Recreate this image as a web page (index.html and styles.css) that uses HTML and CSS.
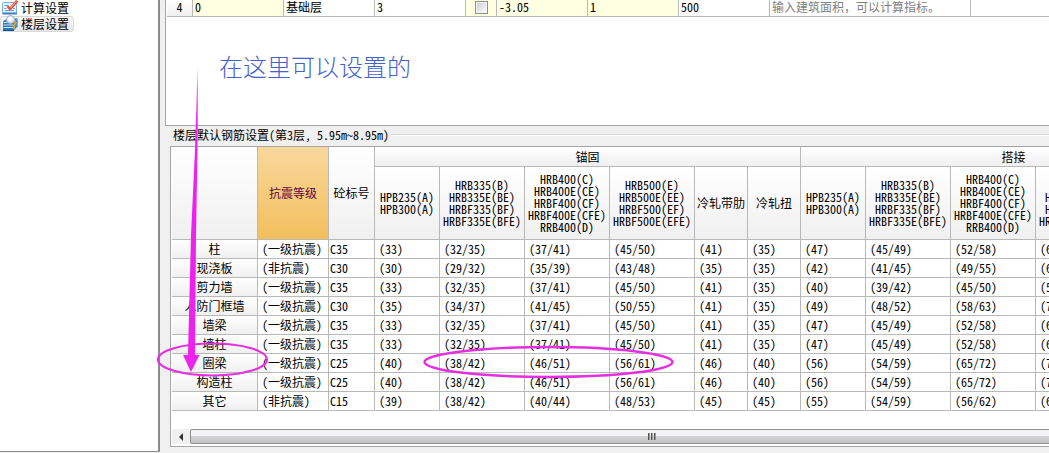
FILE: index.html
```html
<!DOCTYPE html>
<html lang="zh-CN">
<head>
<meta charset="utf-8">
<title>楼层设置</title>
<link rel="stylesheet" href="styles.css">
</head>
<body>
<div class="app">
  <nav class="sidebar">
    <button class="nav-item" type="button">
      <svg class="nav-icon" viewBox="0 0 16 16" aria-hidden="true">
        <rect x="0.5" y="2.5" width="14" height="11" rx="1" fill="#e4f1fc" stroke="#7db2e0"/>
        <path d="M0.500 12.500h14.500v2H0.500z" fill="#3f7dc0"/>
        <path d="M2.500 5.500h4M2.500 8.500h2M11 8.500h2M3 10.500h9" stroke="#6d9fd4"/>
        <path d="M5.500 6l2.500 3.500" stroke="#d9472f" stroke-width="2"/>
        <path d="M14 0l2.500 1.500-7 8-2.500 1 .5-3z" fill="#e2553b"/>
        <path d="M14 1.500l-5.500 6.500" stroke="#f6a58e"/>
      </svg>
      <span>计算设置</span>
    </button>
    <button class="nav-item selected" type="button">
      <svg class="nav-icon" viewBox="0 0 16 16" aria-hidden="true">
        <path d="M1 5.500L5 2.500h10.500v8L12 14.500H1z" fill="#2b78b4"/>
        <path d="M1.500 6.500h10M1.500 9h10M1.500 11.500h10" stroke="#c9eaff"/>
        <path d="M12 6.500L15.500 3M12 9l3.500-3M12 11.500L15.500 8M12 14l3.500-3.500" stroke="#79b6dd"/>
        <path d="M12 4l1.500 3-2 3 1 3" stroke="#d5a13c" stroke-width="2" fill="none"/>
        <circle cx="8.500" cy="3.500" r="4" fill="#dfe8f4" stroke="#a3b2cb"/>
        <circle cx="8" cy="3" r="2" fill="#fff"/>
        <path d="M1 14.500h11" stroke="#174f86"/>
      </svg>
      <span>楼层设置</span>
    </button>
  </nav>

  <main class="main">
    <section class="floors">
      <table class="floor-table">
        <colgroup><col class="w-num"><col class="w-std"><col class="w-std"><col class="w-std"><col class="w-check"><col class="w-std"><col class="w-std"><col class="w-std"><col class="w-note"><col class="w-note"></colgroup>
        <tbody>
          <tr>
            <th scope="row">4</th>
            <td class="tint">0</td>
            <td>基础层</td>
            <td>3</td>
            <td class="tint check"><input type="checkbox" aria-label="首层"></td>
            <td class="tint">-3.05</td>
            <td class="tint">1</td>
            <td>500</td>
            <td class="note">输入建筑面积，可以计算指标。</td>
            <td></td>
          </tr>
        </tbody>
      </table>
    </section>

    <section class="rebar">
      <h2 class="rebar-title">楼层默认钢筋设置(第3层, 5.95m~8.95m)</h2>
      <div class="grid-frame">
        <table class="rebar-table">
          <colgroup><col class="c-name"><col class="c-grade"><col class="c-mark"><col class="c-a"><col class="c-b"><col class="c-b"><col class="c-b"><col class="c-s"><col class="c-s"><col class="c-a"><col class="c-b"><col class="c-b"><col class="c-b"><col class="c-s"><col class="c-s"></colgroup>
          <thead>
            <tr class="groups">
              <th rowspan="2"></th>
              <th rowspan="2" class="active">抗震等级</th>
              <th rowspan="2">砼标号</th>
              <th colspan="6">锚固</th>
              <th colspan="6">搭接</th>
            </tr>
            <tr class="kinds">
              <th>HPB235(A)<br>HPB300(A)</th>
              <th>HRB335(B)<br>HRB335E(BE)<br>HRBF335(BF)<br>HRBF335E(BFE)</th>
              <th>HRB400(C)<br>HRB400E(CE)<br>HRBF400(CF)<br>HRBF400E(CFE)<br>RRB400(D)</th>
              <th>HRB500(E)<br>HRB500E(EE)<br>HRBF500(EF)<br>HRBF500E(EFE)</th>
              <th>冷轧带肋</th>
              <th>冷轧扭</th>
              <th>HPB235(A)<br>HPB300(A)</th>
              <th>HRB335(B)<br>HRB335E(BE)<br>HRBF335(BF)<br>HRBF335E(BFE)</th>
              <th>HRB400(C)<br>HRB400E(CE)<br>HRBF400(CF)<br>HRBF400E(CFE)<br>RRB400(D)</th>
              <th>HRB500(E)<br>HRB500E(EE)<br>HRBF500(EF)<br>HRBF500E(EFE)</th>
              <th>冷轧带肋</th>
              <th>冷轧扭</th>
            </tr>
          </thead>
          <tbody>
            <tr><th scope="row">柱</th><td>(一级抗震)</td><td class="mark">C35</td><td>(33)</td><td>(32/35)</td><td>(37/41)</td><td>(45/50)</td><td>(41)</td><td>(35)</td><td>(47)</td><td>(45/49)</td><td>(52/58)</td><td>(6</td><td></td><td></td></tr>
            <tr><th scope="row">现浇板</th><td>(非抗震)</td><td class="mark">C30</td><td>(30)</td><td>(29/32)</td><td>(35/39)</td><td>(43/48)</td><td>(35)</td><td>(35)</td><td>(42)</td><td>(41/45)</td><td>(49/55)</td><td>(6</td><td></td><td></td></tr>
            <tr><th scope="row">剪力墙</th><td>(一级抗震)</td><td class="mark">C35</td><td>(33)</td><td>(32/35)</td><td>(37/41)</td><td>(45/50)</td><td>(41)</td><td>(35)</td><td>(40)</td><td>(39/42)</td><td>(45/50)</td><td>(5</td><td></td><td></td></tr>
            <tr><th scope="row">人防门框墙</th><td>(一级抗震)</td><td class="mark">C30</td><td>(35)</td><td>(34/37)</td><td>(41/45)</td><td>(50/55)</td><td>(41)</td><td>(35)</td><td>(49)</td><td>(48/52)</td><td>(58/63)</td><td>(7</td><td></td><td></td></tr>
            <tr><th scope="row">墙梁</th><td>(一级抗震)</td><td class="mark">C35</td><td>(33)</td><td>(32/35)</td><td>(37/41)</td><td>(45/50)</td><td>(41)</td><td>(35)</td><td>(47)</td><td>(45/49)</td><td>(52/58)</td><td>(6</td><td></td><td></td></tr>
            <tr><th scope="row">墙柱</th><td>(一级抗震)</td><td class="mark">C35</td><td>(33)</td><td>(32/35)</td><td>(37/41)</td><td>(45/50)</td><td>(41)</td><td>(35)</td><td>(47)</td><td>(45/49)</td><td>(52/58)</td><td>(6</td><td></td><td></td></tr>
            <tr><th scope="row">圈梁</th><td>(一级抗震)</td><td class="mark">C25</td><td>(40)</td><td>(38/42)</td><td>(46/51)</td><td>(56/61)</td><td>(46)</td><td>(40)</td><td>(56)</td><td>(54/59)</td><td>(65/72)</td><td>(7</td><td></td><td></td></tr>
            <tr><th scope="row">构造柱</th><td>(一级抗震)</td><td class="mark">C25</td><td>(40)</td><td>(38/42)</td><td>(46/51)</td><td>(56/61)</td><td>(46)</td><td>(40)</td><td>(56)</td><td>(54/59)</td><td>(65/72)</td><td>(7</td><td></td><td></td></tr>
            <tr><th scope="row">其它</th><td>(非抗震)</td><td class="mark">C15</td><td>(39)</td><td>(38/42)</td><td>(40/44)</td><td>(48/53)</td><td>(45)</td><td>(45)</td><td>(55)</td><td>(54/59)</td><td>(56/62)</td><td>(6</td><td></td><td></td></tr>
          </tbody>
        </table>
        <div class="scrollbar">
          <button class="scroll-left" type="button" aria-label="向左滚动">
            <svg viewBox="0 0 4 8" aria-hidden="true"><path d="M4 0v8L0 4z" fill="#333"/></svg>
          </button>
          <div class="thumb"><i></i><i></i><i></i></div>
        </div>
      </div>
    </section>
  </main>

  <p class="callout">在这里可以设置的</p>
  <svg class="marks" width="700" height="400" viewBox="0 0 700 400" aria-hidden="true">
    <defs>
      <linearGradient id="fade" gradientUnits="userSpaceOnUse" x1="0" y1="65" x2="0" y2="125">
        <stop offset="0" stop-color="#ee22ee" stop-opacity=".35"/>
        <stop offset="1" stop-color="#ee22ee"/>
      </linearGradient>
    </defs>
    <path d="M197.500 65L198 90L197.500 150L196 235L195 355H199.500L191 372L183 355H188L191 235L195 150L196.500 100Z" fill="url(#fade)"/>
    <ellipse cx="212.500" cy="359.500" rx="54.500" ry="16" fill="none" stroke="#e52fe0" stroke-width="2.200"/>
    <ellipse cx="548.500" cy="362" rx="124" ry="15" fill="none" stroke="#e52fe0" stroke-width="2.500"/>
  </svg>
</div>
</body>
</html>
```

FILE: styles.css
```css
* { box-sizing: border-box; }

body {
  margin: 0;
  background: #f0f0f0;
  color: #000;
  font: 12px/12px "Noto Sans Mono CJK SC", "Liberation Mono", "Noto Sans CJK SC", monospace;
}

.app {
  position: relative;
  display: flex;
  height: 100vh;
  overflow: hidden;
}

/* Sidebar */
.sidebar {
  flex: none;
  width: 160px;
  margin-bottom: 1px;
  padding-right: 1px;
  background: #fff;
  border-right: 2px solid #8c8c8c;
  border-bottom: 1px solid #8c8c8c;
}

.nav-item {
  display: flex;
  align-items: center;
  gap: 3px;
  height: 16px;
  padding: 0 4px 0 1px;
  border: 1px solid transparent;
  border-radius: 3px;
  background: none;
  color: inherit;
  font: inherit;
}

.nav-item.selected {
  border-color: #d9d9d9;
  background: linear-gradient(#f8f8f8, #e6e6e6);
}

.nav-icon {
  flex: none;
  width: 16px;
  height: 16px;
  overflow: visible;
}

/* Main area */
.main {
  flex: 1;
  min-width: 0;
  display: flex;
  flex-direction: column;
  padding-left: 5px;
  overflow: hidden;
}

table {
  table-layout: fixed;
  border-collapse: separate;
  border-spacing: 0;
}

th, td {
  padding: 0;
  border-right: 1px solid #b9b9b9;
  border-bottom: 1px solid #b9b9b9;
  font-weight: normal;
  white-space: nowrap;
  overflow: hidden;
}

th { background: linear-gradient(#fff, #f0f0f0); }

.floors {
  flex: none;
  height: 126px;
  padding-left: 1px;
  background: #fff;
  border-left: 1px solid #a5a5a5;
  border-bottom: 1px solid #a5a5a5;
}

.floor-table { width: 1004px; }
.floor-table th, .floor-table td { height: 17px; padding-bottom: 2px; }
.floor-table td { padding-left: 2px; }
.floor-table .tint { background: #ffffe1; }
.floor-table .note { color: #808080; }
.floor-table .check { padding-left: 0; }

.w-num { width: 26px; }
.w-std { width: 91px; }
.w-check { width: 31px; }
.w-note { width: 201px; }

.check input {
  appearance: none;
  display: block;
  width: 13px;
  height: 13px;
  margin: 0 auto;
  border: 1px solid #8e8f8f;
  background: linear-gradient(135deg, #c8ccd0, #fff);
  box-shadow: inset 0 0 0 1px #f4f4f4;
}

/* Rebar settings */
.rebar { padding: 1px 0 0 5px; }

.rebar-title {
  display: flex;
  align-items: center;
  gap: 2px;
  margin: 0;
  padding-left: 3px;
  font-size: 12px;
  line-height: 16px;
  font-weight: normal;
  white-space: nowrap;
}

.rebar-title::after {
  content: "";
  flex: 1;
  height: 2px;
  background: linear-gradient(#d5d5d5 50%, #fff 50%);
}

.grid-frame {
  margin-top: 3px;
  padding-left: 1px;
  background: #fff;
  border: 1px solid #a5a5a5;
  border-right: 0;
  overflow: hidden;
}

.rebar-table { width: 1055px; }
.c-name { width: 86px; }
.c-grade { width: 71px; }
.c-mark { width: 46px; }
.c-a { width: 65px; }
.c-b { width: 85px; }
.c-s { width: 53px; }

.groups th { height: 20px; }
.kinds th { height: 73px; }
.groups .active {
  background: linear-gradient(#f8d89c, #f2bf5c);
  color: #600040;
}

.rebar-table tbody th, .rebar-table tbody td { height: 19px; }
.rebar-table td { padding-left: 4px; }
.rebar-table .mark { padding-left: 1px; }

.scrollbar {
  display: flex;
  height: 15px;
  margin: 18px 0 2px;
  background: #f0f0f0;
}

.scroll-left {
  flex: none;
  display: flex;
  align-items: center;
  justify-content: center;
  width: 18px;
  padding: 0;
  border: 0;
  background: none;
}

.scroll-left svg { width: 4px; height: 8px; }

.thumb {
  flex: none;
  display: flex;
  align-items: center;
  justify-content: center;
  gap: 1px;
  width: 924px;
  border: 1px solid #8f8f8f;
  border-radius: 2px;
  background: linear-gradient(#f4f4f4 0 45%, #d2d2d4 50%, #c2c2c5);
}

.thumb i {
  width: 2px;
  height: 7px;
  background: linear-gradient(90deg, #555 50%, #999 50%);
}

/* Annotations over the window */
.callout {
  position: absolute;
  left: 219px;
  top: 52px;
  margin: 0;
  color: #4562cc;
  font: 300 24px/28px "Noto Sans CJK SC", sans-serif;
}

.marks {
  position: absolute;
  left: 0;
  top: 0;
  pointer-events: none;
}
```
